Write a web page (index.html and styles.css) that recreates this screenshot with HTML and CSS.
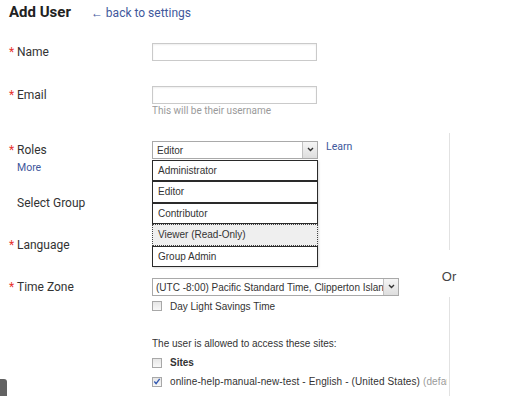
FILE: index.html
```html
<!DOCTYPE html>
<html>
<head>
<meta charset="utf-8">
<link rel="stylesheet" href="styles.css">
</head>
<body>
<div class="page">
  <div class="main">
    <header class="head">
      <h1 class="title">Add User</h1>
      <a class="back" href="#">← back to settings</a>
    </header>

    <div class="row r-name">
      <div class="lbl"><span class="req">*</span>Name</div>
      <div class="field"><div class="input"></div></div>
    </div>

    <div class="row r-email">
      <div class="lbl"><span class="req">*</span>Email</div>
      <div class="field">
        <div class="input"></div>
        <div class="hint">This will be their username</div>
      </div>
    </div>

    <div class="row r-roles">
      <div class="lbl">
        <div><span class="req">*</span>Roles</div>
        <a class="more" href="#">More</a>
      </div>
      <div class="field roles-field">
        <div class="select role-select">
          <span class="sel-text">Editor</span>
          <span class="sel-btn"><svg width="7" height="5" viewBox="0 0 7 5"><polyline points="1,1 3.5,3.5 6,1" fill="none" stroke="#333" stroke-width="1.4"/></svg></span>
        </div>
        <a class="learn" href="#">Learn</a>
        <ul class="dropdown">
          <li class="opt">Administrator</li>
          <li class="opt">Editor</li>
          <li class="opt">Contributor</li>
          <li class="opt hover">Viewer (Read-Only)</li>
          <li class="opt">Group Admin</li>
        </ul>
      </div>
    </div>

    <div class="row r-group">
      <div class="lbl"><span class="noreq"></span>Select Group</div>
      <div class="field"><div class="blank"></div></div>
    </div>

    <div class="row r-lang">
      <div class="lbl"><span class="req">*</span>Language</div>
      <div class="field"><div class="blank"></div></div>
    </div>

    <div class="row r-tz">
      <div class="lbl"><span class="req">*</span>Time Zone</div>
      <div class="field tz-field">
        <div class="select tz-select">
          <span class="sel-text">(UTC -8:00) Pacific Standard Time, Clipperton Island</span>
          <span class="sel-btn"><svg width="7" height="5" viewBox="0 0 7 5"><polyline points="1,1 3.5,3.5 6,1" fill="none" stroke="#333" stroke-width="1.4"/></svg></span>
        </div>
        <div class="check-row dst">
          <span class="cb"></span><span class="cb-label">Day Light Savings Time</span>
        </div>
        <div class="sites-intro">The user is allowed to access these sites:</div>
        <div class="check-row site-row">
          <span class="cb"></span><span class="cb-label bold">Sites</span>
        </div>
        <div class="check-row site-row">
          <span class="cb checked"><svg width="9" height="9" viewBox="0 0 9 9"><polyline points="1.5,4.5 3.5,7 7.5,1.5" fill="none" stroke="#2f56b0" stroke-width="1.5"/></svg></span><span class="cb-label site-name">online-help-manual-new-test - English - (United States) <span class="muted">(default)</span></span>
        </div>
      </div>
    </div>
  </div>

  <div class="side">
    <div class="vline upper"></div>
    <div class="or">Or</div>
    <div class="vline lower"></div>
  </div>
</div>
<div class="tab"></div>
</body>
</html>
```

FILE: styles.css
```css
* { box-sizing: border-box; }

html, body {
  margin: 0;
  padding: 0;
  background: #fff;
  height: 100%;
  overflow: hidden;
}

body {
  font-family: "Roboto", "Liberation Sans", sans-serif;
  color: #333;
}

.page {
  display: grid;
  grid-template-columns: 441px 16px;
  height: 396px;
}

.main {
  padding-left: 9px;
  display: flex;
  flex-direction: column;
  min-width: 0;
}

.head {
  display: flex;
  align-items: baseline;
  gap: 20px;
  padding-top: 2px;
  height: 22px;
  line-height: 20px;
  flex: none;
}

.title {
  margin: 0;
  font-size: 15px;
  font-weight: 700;
  color: #222;
}

.back {
  font-size: 12px;
  color: #41589c;
  text-decoration: none;
}

.row {
  display: flex;
  align-items: flex-start;
  flex: none;
}

.r-name { margin-top: 21px; }
.r-email { margin-top: 25px; }
.r-roles { margin-top: 24px; }
.r-group { margin-top: 17px; }
.r-lang { margin-top: 24px; }
.r-tz { margin-top: 24px; }

.lbl {
  width: 143px;
  flex: none;
  font-size: 12px;
  line-height: 18px;
  height: 18px;
  color: #333;
}

.r-roles .lbl { height: 36px; }

.req, .noreq {
  display: inline-block;
  width: 8px;
  color: #e8322f;
  font-size: 12px;
  line-height: 18px;
  vertical-align: top;
}

.more {
  display: block;
  padding-left: 8px;
  font-size: 10.5px;
  line-height: 18px;
  color: #41589c;
  text-decoration: none;
}

.field {
  width: 295px;
  flex: none;
  overflow: hidden;
}

.input {
  width: 165px;
  height: 18px;
  border: 1px solid #cacaca;
  background: #fff;
  box-shadow: inset 0 1px 2px rgba(0, 0, 0, 0.07);
}

.hint {
  margin-top: 1px;
  font-size: 10px;
  line-height: 12px;
  color: #9a9a9a;
}

.blank { height: 18px; }

.roles-field {
  position: relative;
  display: flex;
  align-items: flex-start;
  overflow: visible;
}

.select {
  display: flex;
  align-items: center;
  height: 18px;
  border: 1px solid #a9a9a9;
  background: #fff;
  font-family: "Liberation Sans", Arial, sans-serif;
  font-size: 10px;
  color: #333;
  overflow: hidden;
}

.sel-text {
  flex: 1;
  min-width: 0;
  padding-left: 4px;
  white-space: nowrap;
  overflow: hidden;
}

.sel-btn {
  flex: none;
  width: 15px;
  height: 17px;
  margin-top: -1px;
  display: flex;
  align-items: center;
  justify-content: center;
  border-left: 1px solid #c2c2c2;
  background: linear-gradient(#f7f7f7, #dedede);
}

.role-select { width: 166px; }
.tz-select { width: 247px; }
.tz-select .sel-text { padding-left: 3px; }

.learn {
  margin-left: 8px;
  font-size: 10.5px;
  line-height: 12px;
  color: #41589c;
  text-decoration: none;
}

.dropdown {
  position: absolute;
  top: 19px;
  left: 0;
  width: 166px;
  margin: 0;
  padding: 0;
  list-style: none;
  background: #fff;
  box-shadow: 1px 1px 2px rgba(0, 0, 0, 0.15);
  font-family: "Liberation Sans", Arial, sans-serif;
  font-size: 10px;
  color: #333;
  z-index: 2;
}

.opt {
  height: 21.4px;
  line-height: 19.4px;
  padding-left: 5px;
  border: 1px solid #2a2a2a;
}

.opt.hover {
  border: 1px dotted #444;
  background: #efefef;
}

.check-row {
  display: flex;
  align-items: center;
  gap: 8px;
  font-family: "Liberation Sans", Arial, sans-serif;
  font-size: 10px;
  color: #333;
  white-space: nowrap;
}

.dst {
  margin-top: 1px;
  height: 18px;
}

.site-row { height: 19px; }

.site-name { letter-spacing: 0.12px; }

.sites-intro {
  margin-top: 19px;
  height: 19px;
  line-height: 19px;
  font-family: "Liberation Sans", Arial, sans-serif;
  font-size: 10px;
  color: #333;
  white-space: nowrap;
}

.cb {
  flex: none;
  width: 10px;
  height: 10px;
  border: 1px solid #a8a8a8;
  background: linear-gradient(#e6e6e6, #f8f8f8);
  display: flex;
  align-items: center;
  justify-content: center;
}

.cb.checked svg { margin-top: -1px; }

.bold { font-weight: 700; }

.muted { color: #9a9a9a; }

.side {
  display: flex;
  flex-direction: column;
  align-items: center;
  padding-top: 133px;
}

.vline {
  width: 1px;
  background: #e2e2e2;
}

.vline.upper { height: 117px; }
.vline.lower { flex: 1; }

.or {
  margin-top: 20px;
  margin-bottom: 14px;
  height: 13px;
  line-height: 13px;
  font-family: "Liberation Sans", Arial, sans-serif;
  font-size: 13px;
  color: #444;
}

.tab {
  position: fixed;
  left: 0;
  bottom: 0;
  width: 7px;
  height: 17px;
  background: #626262;
  border-radius: 0 3px 0 0;
}
```
